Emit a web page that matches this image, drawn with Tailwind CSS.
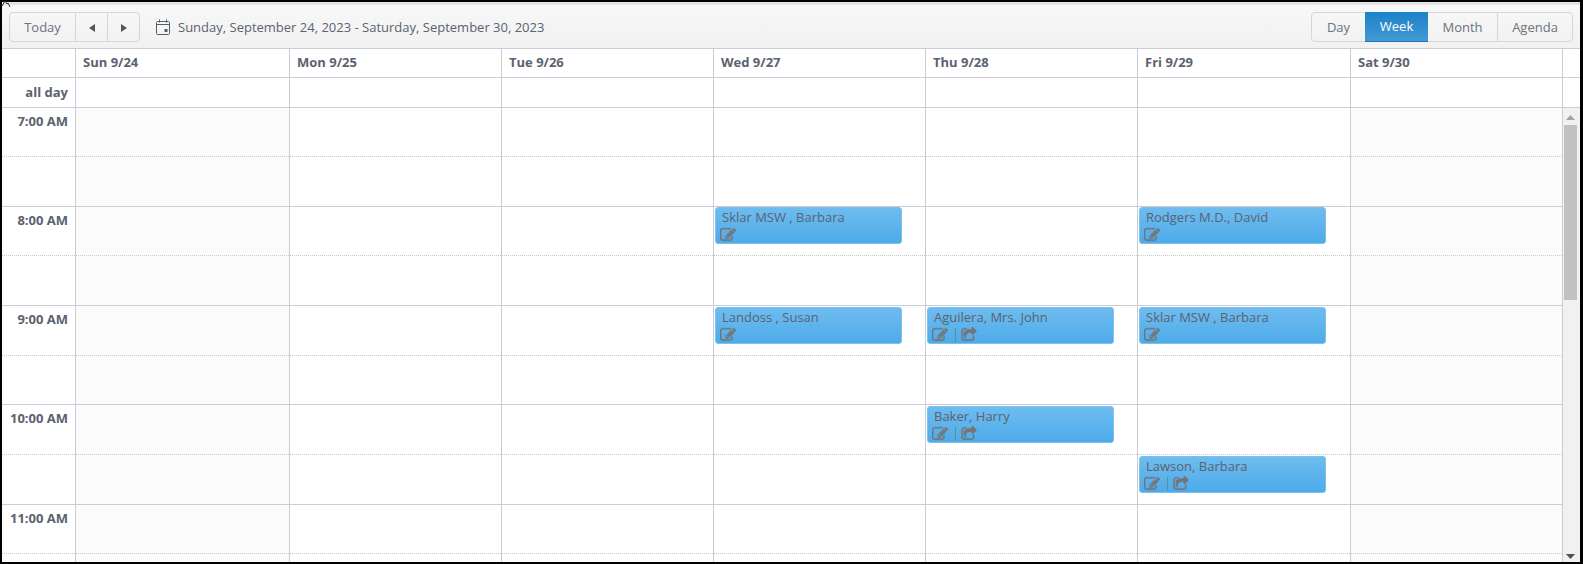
<!DOCTYPE html>
<html lang="en">
<head>
  <meta charset="UTF-8">
  <title>Calendar</title>
  <script src="https://cdn.jsdelivr.net/npm/@tailwindcss/browser@4"></script>
</head>
<body class="relative bg-white font-['Open_Sans',sans-serif] text-[13px] text-[#5b6270]">
  <!-- stray cursor left in the corner of the capture -->
  <svg class="absolute left-0 top-0" width="11" height="8" viewBox="0 0 11 8" fill="none" stroke="#333"><path d="M2 6L5 1l2 3 1-1 2 4"/></svg>

  <div class="flex flex-col h-[564px] overflow-hidden border-t-2 border-l-2 border-r-[3px] border-b-2 border-black">

    <!-- toolbar -->
    <div class="flex items-center justify-between h-[47px] shrink-0 pl-[7px] pr-[7px] border-t-[3px] border-t-[#e4e4e4] border-b border-b-[#ccccd4] bg-gradient-to-b from-[#f8f8f8] to-[#f1f1f1]">
      <div class="flex items-center">
        <div class="flex h-[30px] rounded border border-[#d6d6d6] text-[#6b7280]">
          <button class="w-[66px] pt-[2px] border-r border-[#d6d6d6]">Today</button>
          <button class="w-[32px] pt-[3px] flex items-center justify-center border-r border-[#d6d6d6]">
            <svg width="6" height="8" viewBox="0 0 6 8"><path d="M6 0v8L0 4z" fill="#555"/></svg>
          </button>
          <button class="w-[31px] pt-[3px] flex items-center justify-center">
            <svg width="6" height="8" viewBox="0 0 6 8"><path d="M0 0v8l6-4z" fill="#555"/></svg>
          </button>
        </div>
        <svg class="ml-[16px] mr-[7px]" width="15" height="16" viewBox="0 0 15 16" fill="none" stroke="#555e6b">
          <rect x="0.5" y="2.5" width="13" height="13" rx="1"/>
          <path d="M0.500 5.500h13M3.500 0.500v3M10.500 0.500v3"/>
          <rect x="8.500" y="10" width="3" height="3" fill="#555e6b" stroke="none"/>
        </svg>
        <span class="pt-[2px]">Sunday, September 24, 2023 - Saturday, September 30, 2023</span>
      </div>
      <div class="flex h-[30px] rounded border border-[#d6d6d6] text-[#6b7280]">
        <button class="w-[53px] pt-[2px]">Day</button>
        <button class="w-[63px] pt-[2px] -my-px bg-gradient-to-b from-[#1a82c9] to-[#4298d3] text-white border-b border-[#1a78ba]">Week</button>
        <button class="w-[70px] pt-[2px] border-r border-[#d6d6d6]">Month</button>
        <button class="w-[74px] pt-[2px]">Agenda</button>
      </div>
    </div>

    <!-- day headers -->
    <div class="flex h-[29px] shrink-0 border-b border-[#ccccd4] font-bold">
      <div class="w-[74px] border-r border-[#ccccd4]"></div>
      <div class="grid grid-cols-[214px_212px_212px_212px_212px_213px_212px] w-[1487px] items-center h-full">
        <div class="h-full flex items-center pl-[7px] border-r border-[#ccccd4]">Sun 9/24</div>
        <div class="h-full flex items-center pl-[7px] border-r border-[#ccccd4]">Mon 9/25</div>
        <div class="h-full flex items-center pl-[7px] border-r border-[#ccccd4]">Tue 9/26</div>
        <div class="h-full flex items-center pl-[7px] border-r border-[#ccccd4]">Wed 9/27</div>
        <div class="h-full flex items-center pl-[7px] border-r border-[#ccccd4]">Thu 9/28</div>
        <div class="h-full flex items-center pl-[7px] border-r border-[#ccccd4]">Fri 9/29</div>
        <div class="h-full flex items-center pl-[7px] border-r border-[#ccccd4]">Sat 9/30</div>
      </div>
    </div>

    <!-- all day row -->
    <div class="flex h-[30px] shrink-0 border-b border-[#ccccd4]">
      <div class="w-[74px] border-r border-[#ccccd4] flex items-center justify-end pr-[7px] font-bold">all day</div>
      <div class="grid grid-cols-[214px_212px_212px_212px_212px_213px_212px] w-[1487px] h-full">
        <div class="border-r border-[#ccccd4]"></div>
        <div class="border-r border-[#ccccd4]"></div>
        <div class="border-r border-[#ccccd4]"></div>
        <div class="border-r border-[#ccccd4]"></div>
        <div class="border-r border-[#ccccd4]"></div>
        <div class="border-r border-[#ccccd4]"></div>
        <div class="border-r border-[#ccccd4]"></div>
      </div>
    </div>

    <!-- time grid + scrollbar -->
    <div class="flex flex-1 min-h-0 overflow-hidden">
      <div class="w-[74px] shrink-0 -mt-[0.5px] border-r border-[#ccccd4] font-bold text-right">
        <div class="h-[49.625px] pt-[4px] pr-[7px] border-b border-dotted border-[#cccccc]">7:00 AM</div>
        <div class="h-[49.625px] border-b border-[#ccccd4]"></div>
        <div class="h-[49.625px] pt-[4px] pr-[7px] border-b border-dotted border-[#cccccc]">8:00 AM</div>
        <div class="h-[49.625px] border-b border-[#ccccd4]"></div>
        <div class="h-[49.625px] pt-[4px] pr-[7px] border-b border-dotted border-[#cccccc]">9:00 AM</div>
        <div class="h-[49.625px] border-b border-[#ccccd4]"></div>
        <div class="h-[49.625px] pt-[4px] pr-[7px] border-b border-dotted border-[#cccccc]">10:00 AM</div>
        <div class="h-[49.625px] border-b border-[#ccccd4]"></div>
        <div class="h-[49.625px] pt-[4px] pr-[7px] border-b border-dotted border-[#cccccc]">11:00 AM</div>
        <div class="h-[49.625px]"></div>
      </div>

      <div class="grid grid-cols-[214px_212px_212px_212px_212px_213px_212px] w-[1487px] shrink-0 -mt-[0.5px]">
        <!-- Sun -->
        <div class="border-r border-[#ccccd4] bg-[#fbfbfb]">
          <div class="h-[49.625px] border-b border-dotted border-[#cccccc]"></div><div class="h-[49.625px] border-b border-[#ccccd4]"></div>
          <div class="h-[49.625px] border-b border-dotted border-[#cccccc]"></div><div class="h-[49.625px] border-b border-[#ccccd4]"></div>
          <div class="h-[49.625px] border-b border-dotted border-[#cccccc]"></div><div class="h-[49.625px] border-b border-[#ccccd4]"></div>
          <div class="h-[49.625px] border-b border-dotted border-[#cccccc]"></div><div class="h-[49.625px] border-b border-[#ccccd4]"></div>
          <div class="h-[49.625px] border-b border-dotted border-[#cccccc]"></div><div class="h-[49.625px]"></div>
        </div>
        <!-- Mon -->
        <div class="border-r border-[#ccccd4]">
          <div class="h-[49.625px] border-b border-dotted border-[#cccccc]"></div><div class="h-[49.625px] border-b border-[#ccccd4]"></div>
          <div class="h-[49.625px] border-b border-dotted border-[#cccccc]"></div><div class="h-[49.625px] border-b border-[#ccccd4]"></div>
          <div class="h-[49.625px] border-b border-dotted border-[#cccccc]"></div><div class="h-[49.625px] border-b border-[#ccccd4]"></div>
          <div class="h-[49.625px] border-b border-dotted border-[#cccccc]"></div><div class="h-[49.625px] border-b border-[#ccccd4]"></div>
          <div class="h-[49.625px] border-b border-dotted border-[#cccccc]"></div><div class="h-[49.625px]"></div>
        </div>
        <!-- Tue -->
        <div class="border-r border-[#ccccd4]">
          <div class="h-[49.625px] border-b border-dotted border-[#cccccc]"></div><div class="h-[49.625px] border-b border-[#ccccd4]"></div>
          <div class="h-[49.625px] border-b border-dotted border-[#cccccc]"></div><div class="h-[49.625px] border-b border-[#ccccd4]"></div>
          <div class="h-[49.625px] border-b border-dotted border-[#cccccc]"></div><div class="h-[49.625px] border-b border-[#ccccd4]"></div>
          <div class="h-[49.625px] border-b border-dotted border-[#cccccc]"></div><div class="h-[49.625px] border-b border-[#ccccd4]"></div>
          <div class="h-[49.625px] border-b border-dotted border-[#cccccc]"></div><div class="h-[49.625px]"></div>
        </div>
        <!-- Wed -->
        <div class="border-r border-[#ccccd4]">
          <div class="h-[49.625px] border-b border-dotted border-[#cccccc]"></div><div class="h-[49.625px] border-b border-[#ccccd4]"></div>
          <div class="relative h-[49.625px] border-b border-dotted border-[#cccccc]">
            <div class="absolute left-px top-0 w-[187px] h-[37px] rounded-[3px] border border-[#7cc0ee] bg-gradient-to-b from-[#6ebcef] to-[#4dabea] pl-[6px] leading-[17px] text-[#5b6270]">
              <div class="pt-px">Sklar MSW , Barbara</div>
              <div class="flex items-center h-[18px] -ml-[2px]">
                <svg class="w-[16px] h-[16px] fill-[#757575] stroke-[#757575] [stroke-width:50]" viewBox="0 0 1792 1792"><use href="#fa-edit"/></svg>
              </div>
            </div>
          </div>
          <div class="h-[49.625px] border-b border-[#ccccd4]"></div>
          <div class="relative h-[49.625px] border-b border-dotted border-[#cccccc]">
            <div class="absolute left-px top-px w-[187px] h-[37px] rounded-[3px] border border-[#7cc0ee] bg-gradient-to-b from-[#6ebcef] to-[#4dabea] pl-[6px] leading-[17px] text-[#5b6270]">
              <div class="pt-px">Landoss , Susan</div>
              <div class="flex items-center h-[18px] -ml-[2px]">
                <svg class="w-[16px] h-[16px] fill-[#757575] stroke-[#757575] [stroke-width:50]" viewBox="0 0 1792 1792"><use href="#fa-edit"/></svg>
              </div>
            </div>
          </div>
          <div class="h-[49.625px] border-b border-[#ccccd4]"></div>
          <div class="h-[49.625px] border-b border-dotted border-[#cccccc]"></div><div class="h-[49.625px] border-b border-[#ccccd4]"></div>
          <div class="h-[49.625px] border-b border-dotted border-[#cccccc]"></div><div class="h-[49.625px]"></div>
        </div>
        <!-- Thu -->
        <div class="border-r border-[#ccccd4]">
          <div class="h-[49.625px] border-b border-dotted border-[#cccccc]"></div><div class="h-[49.625px] border-b border-[#ccccd4]"></div>
          <div class="h-[49.625px] border-b border-dotted border-[#cccccc]"></div><div class="h-[49.625px] border-b border-[#ccccd4]"></div>
          <div class="relative h-[49.625px] border-b border-dotted border-[#cccccc]">
            <div class="absolute left-px top-px w-[187px] h-[37px] rounded-[3px] border border-[#7cc0ee] bg-gradient-to-b from-[#6ebcef] to-[#4dabea] pl-[6px] leading-[17px] text-[#5b6270]">
              <div class="pt-px">Aguilera, Mrs. John</div>
              <div class="flex items-center h-[18px] -ml-[2px]">
                <svg class="w-[16px] h-[16px] fill-[#757575] stroke-[#757575] [stroke-width:50]" viewBox="0 0 1792 1792"><use href="#fa-edit"/></svg>
                <span class="w-px h-[14px] bg-[#5f8f8a] ml-[7px] mr-[5px]"></span>
                <svg class="w-[16px] h-[16px] fill-[#757575] stroke-[#757575] [stroke-width:50]" viewBox="0 0 1792 1792"><use href="#fa-share"/></svg>
              </div>
            </div>
          </div>
          <div class="h-[49.625px] border-b border-[#ccccd4]"></div>
          <div class="relative h-[49.625px] border-b border-dotted border-[#cccccc]">
            <div class="absolute left-px top-px w-[187px] h-[37px] rounded-[3px] border border-[#7cc0ee] bg-gradient-to-b from-[#6ebcef] to-[#4dabea] pl-[6px] leading-[17px] text-[#5b6270]">
              <div class="pt-px">Baker, Harry</div>
              <div class="flex items-center h-[18px] -ml-[2px]">
                <svg class="w-[16px] h-[16px] fill-[#757575] stroke-[#757575] [stroke-width:50]" viewBox="0 0 1792 1792"><use href="#fa-edit"/></svg>
                <span class="w-px h-[14px] bg-[#5f8f8a] ml-[7px] mr-[5px]"></span>
                <svg class="w-[16px] h-[16px] fill-[#757575] stroke-[#757575] [stroke-width:50]" viewBox="0 0 1792 1792"><use href="#fa-share"/></svg>
              </div>
            </div>
          </div>
          <div class="h-[49.625px] border-b border-[#ccccd4]"></div>
          <div class="h-[49.625px] border-b border-dotted border-[#cccccc]"></div><div class="h-[49.625px]"></div>
        </div>
        <!-- Fri -->
        <div class="border-r border-[#ccccd4]">
          <div class="h-[49.625px] border-b border-dotted border-[#cccccc]"></div><div class="h-[49.625px] border-b border-[#ccccd4]"></div>
          <div class="relative h-[49.625px] border-b border-dotted border-[#cccccc]">
            <div class="absolute left-px top-0 w-[187px] h-[37px] rounded-[3px] border border-[#7cc0ee] bg-gradient-to-b from-[#6ebcef] to-[#4dabea] pl-[6px] leading-[17px] text-[#5b6270]">
              <div class="pt-px">Rodgers M.D., David</div>
              <div class="flex items-center h-[18px] -ml-[2px]">
                <svg class="w-[16px] h-[16px] fill-[#757575] stroke-[#757575] [stroke-width:50]" viewBox="0 0 1792 1792"><use href="#fa-edit"/></svg>
              </div>
            </div>
          </div>
          <div class="h-[49.625px] border-b border-[#ccccd4]"></div>
          <div class="relative h-[49.625px] border-b border-dotted border-[#cccccc]">
            <div class="absolute left-px top-px w-[187px] h-[37px] rounded-[3px] border border-[#7cc0ee] bg-gradient-to-b from-[#6ebcef] to-[#4dabea] pl-[6px] leading-[17px] text-[#5b6270]">
              <div class="pt-px">Sklar MSW , Barbara</div>
              <div class="flex items-center h-[18px] -ml-[2px]">
                <svg class="w-[16px] h-[16px] fill-[#757575] stroke-[#757575] [stroke-width:50]" viewBox="0 0 1792 1792"><use href="#fa-edit"/></svg>
              </div>
            </div>
          </div>
          <div class="h-[49.625px] border-b border-[#ccccd4]"></div>
          <div class="h-[49.625px] border-b border-dotted border-[#cccccc]"></div>
          <div class="relative h-[49.625px] border-b border-[#ccccd4]">
            <div class="absolute left-px top-px w-[187px] h-[37px] rounded-[3px] border border-[#7cc0ee] bg-gradient-to-b from-[#6ebcef] to-[#4dabea] pl-[6px] leading-[17px] text-[#5b6270]">
              <div class="pt-px">Lawson, Barbara</div>
              <div class="flex items-center h-[18px] -ml-[2px]">
                <svg class="w-[16px] h-[16px] fill-[#757575] stroke-[#757575] [stroke-width:50]" viewBox="0 0 1792 1792"><use href="#fa-edit"/></svg>
                <span class="w-px h-[14px] bg-[#5f8f8a] ml-[7px] mr-[5px]"></span>
                <svg class="w-[16px] h-[16px] fill-[#757575] stroke-[#757575] [stroke-width:50]" viewBox="0 0 1792 1792"><use href="#fa-share"/></svg>
              </div>
            </div>
          </div>
          <div class="h-[49.625px] border-b border-dotted border-[#cccccc]"></div><div class="h-[49.625px]"></div>
        </div>
        <!-- Sat -->
        <div class="border-r border-[#ccccd4] bg-[#fbfbfb]">
          <div class="h-[49.625px] border-b border-dotted border-[#cccccc]"></div><div class="h-[49.625px] border-b border-[#ccccd4]"></div>
          <div class="h-[49.625px] border-b border-dotted border-[#cccccc]"></div><div class="h-[49.625px] border-b border-[#ccccd4]"></div>
          <div class="h-[49.625px] border-b border-dotted border-[#cccccc]"></div><div class="h-[49.625px] border-b border-[#ccccd4]"></div>
          <div class="h-[49.625px] border-b border-dotted border-[#cccccc]"></div><div class="h-[49.625px] border-b border-[#ccccd4]"></div>
          <div class="h-[49.625px] border-b border-dotted border-[#cccccc]"></div><div class="h-[49.625px]"></div>
        </div>
      </div>

      <!-- scrollbar -->
      <div class="w-[17px] shrink-0 bg-[#f1f1f1] flex flex-col">
        <svg class="mt-[7px] ml-[3px]" width="9" height="5" viewBox="0 0 9 5"><path d="M4.500 0L9 5H0z" fill="#a3a3a3"/></svg>
        <div class="w-[13px] h-[175px] mt-[5px] ml-px bg-[#c1c1c1]"></div>
        <svg class="mt-auto mb-[3px] ml-[3px]" width="9" height="5" viewBox="0 0 9 5"><path d="M4.500 5L9 0H0z" fill="#505050"/></svg>
      </div>
    </div>
  </div>

  <svg class="hidden">
    <symbol id="fa-edit" viewBox="0 0 1792 1792"><path d="M888 1184l116-116-152-152-116 116v56h96v96h56zm440-720q-16-16-33 1l-350 350q-17 17-1 33t33-1l350-350q17-17 1-33zm80 594v190q0 119-84.500 203.500t-203.500 84.500h-832q-119 0-203.500-84.500t-84.500-203.500v-832q0-119 84.500-203.500t203.500-84.500h832q63 0 117 25 15 7 18 23 3 17-9 29l-49 49q-14 14-32 8-23-6-45-6h-832q-66 0-113 47t-47 113v832q0 66 47 113t113 47h832q66 0 113-47t47-113v-126q0-13 9-22l64-64q15-15 35-7t20 29zm-96-738l288 288-672 672h-288v-288zm444 132l-92 92-288-288 92-92q28-28 68-28t68 28l152 152q28 28 28 68t-28 68z"/></symbol>
    <symbol id="fa-share" viewBox="0 0 1792 1792"><path d="M1472 989v259q0 119-84.500 203.500t-203.500 84.500h-832q-119 0-203.500-84.500t-84.500-203.500v-832q0-119 84.500-203.500t203.500-84.500h255q13 0 22.500 9.500t9.500 22.500q0 27-26 32-77 26-133 60-10 4-16 4h-112q-66 0-113 47t-47 113v832q0 66 47 113t113 47h832q66 0 113-47t47-113v-214q0-19 18-29 28-13 54-37 16-16 35-8 21 9 21 29zm237-496l-384 384q-18 19-45 19-12 0-25-5-39-17-39-59v-192h-160q-323 0-438 131-119 137-74 473 3 23-20 34-8 2-12 2-16 0-26-13-10-14-21-31t-39.500-68.500-49.500-99.500-38.500-114-17.500-122q0-49 3.500-91t14-90 28-88 47-81.500 68.500-74 94.500-61.500 124.500-48.500 159.500-30.500 196.500-11h160v-192q0-42 39-59 13-5 25-5 26 0 45 19l384 384q19 19 19 45t-19 45z"/></symbol>
  </svg>
</body>
</html>
